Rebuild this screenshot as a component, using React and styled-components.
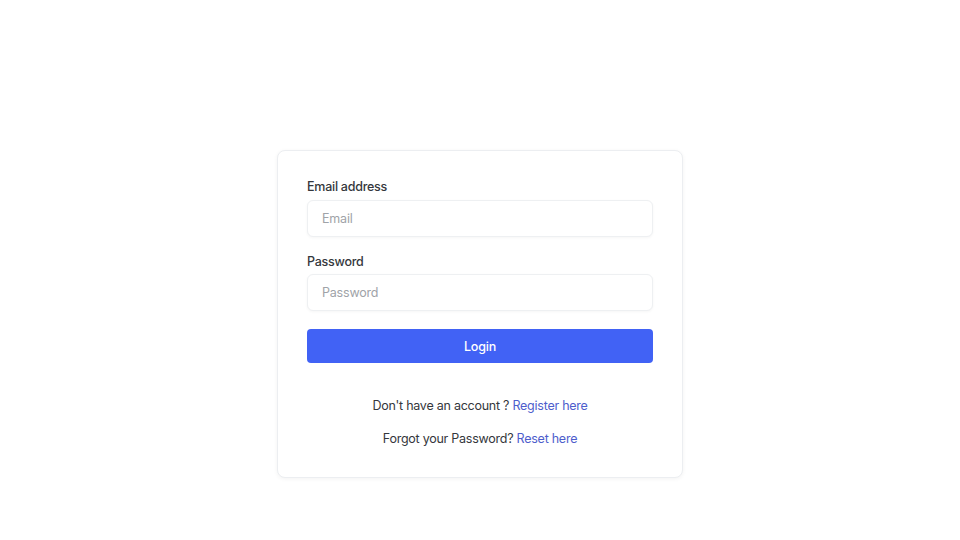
import React from "react";
import styled, { createGlobalStyle } from "styled-components";

const Global = createGlobalStyle`
  html, body { margin: 0; padding: 0; background: #ffffff; }
  body { font-family: Inter, "Noto Sans", sans-serif; color: #2d3036; }
  * { box-sizing: border-box; }
`;

const Page = styled.div`
  width: 960px;
  height: 540px;
  display: flex;
  justify-content: center;
  align-items: flex-start;
  padding-top: 150px;
`;

const Card = styled.form`
  width: 406px;
  background: #fff;
  border: 1px solid #eceef1;
  border-radius: 8px;
  box-shadow: 0 1px 4px rgba(0, 0, 0, 0.05);
  padding: 26px 29px 28px;
  display: flex;
  flex-direction: column;
`;

const Label = styled.label`
  font-size: 12.5px;
  letter-spacing: -0.25px;
  line-height: 20px;
  font-weight: 500;
  color: #34373c;
  margin-bottom: ${(p) => p.$mb ?? 3}px;
`;

const Input = styled.input`
  height: 37px;
  width: 100%;
  border: 1px solid #eef0f2;
  border-radius: 6px;
  box-shadow: 0 1px 3px rgba(0, 0, 0, 0.04);
  padding: 0 14px;
  font-family: inherit;
  font-size: 12.5px;
  letter-spacing: -0.2px;
  color: #333;
  outline: none;
  margin-bottom: ${(p) => p.$mb || 0}px;
  &::placeholder { color: #a0a3a8; }
`;

const Button = styled.button`
  height: 34px;
  width: 100%;
  border: none;
  border-radius: 4px;
  background: #4162f5;
  color: #fff;
  font-family: inherit;
  font-size: 12.5px;
  letter-spacing: -0.2px;
  font-weight: 500;
  margin-top: 18px;
  cursor: pointer;
`;

const Line = styled.p`
  margin: ${(p) => p.$mt}px 0 0;
  text-align: center;
  font-size: 12.5px;
  letter-spacing: -0.25px;
  line-height: 20px;
  color: #34373c;
`;

const Link = styled.a`
  color: #4e5ecc;
  text-decoration: none;
`;

export default function App() {
  return (
    <>
      <Global />
      <Page>
        <Card onSubmit={(e) => e.preventDefault()}>
          <Label>Email address</Label>
          <Input type="email" placeholder="Email" $mb={15} />
          <Label $mb={2}>Password</Label>
          <Input type="password" placeholder="Password" />
          <Button type="submit">Login</Button>
          <Line $mt={33}>
            Don't have an account ? <Link href="#">Register here</Link>
          </Line>
          <Line $mt={13}>
            Forgot your Password? <Link href="#">Reset here</Link>
          </Line>
        </Card>
      </Page>
    </>
  );
}
